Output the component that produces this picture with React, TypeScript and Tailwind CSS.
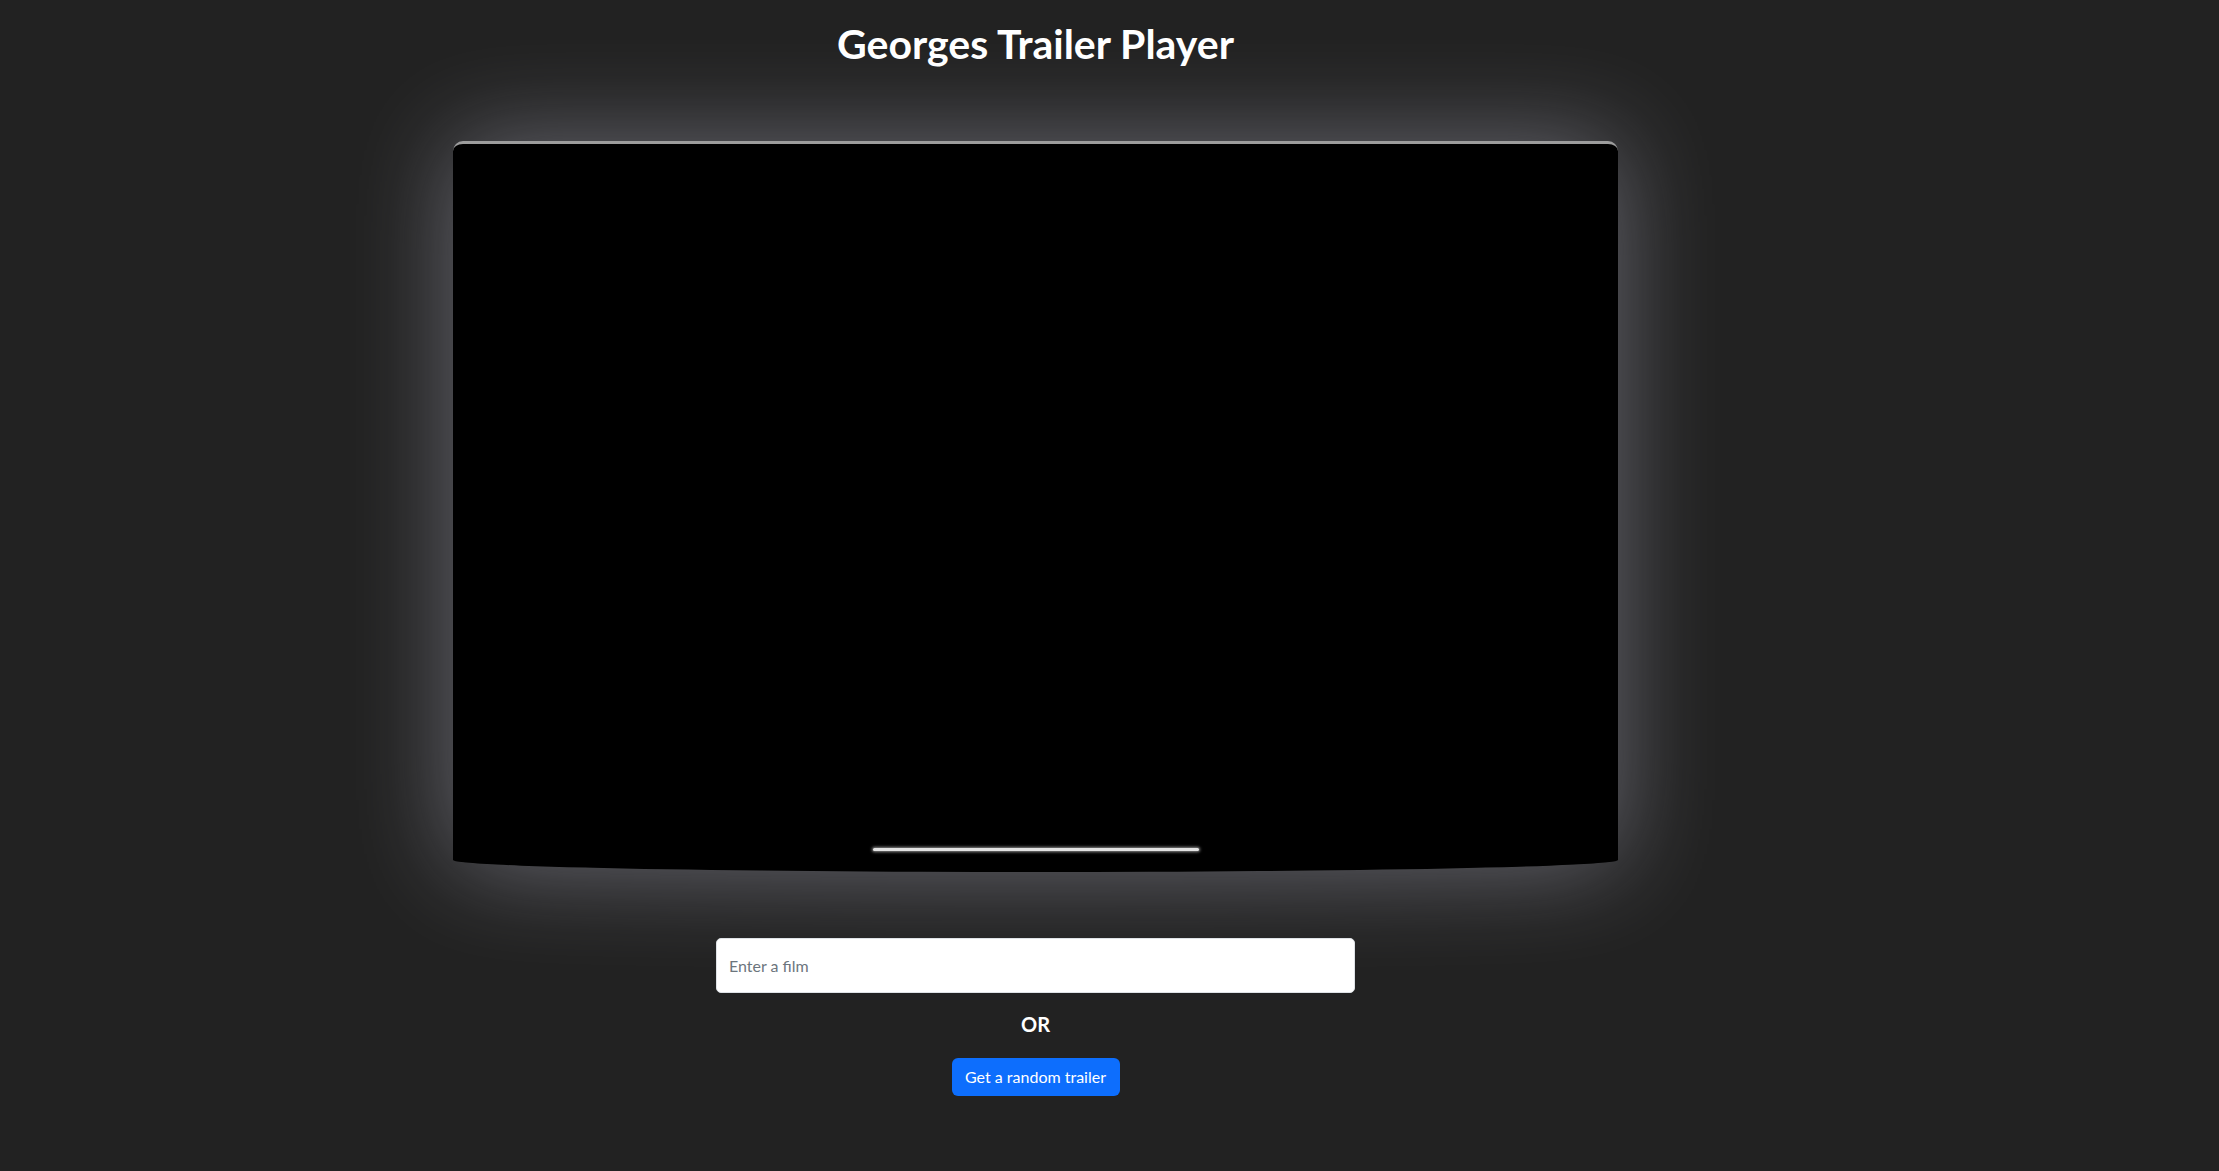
import React from "react";

export default function App() {
  return (
    <div className="min-h-screen w-full bg-[#222222] flex flex-col items-center pr-[148px] font-['Lato','Noto_Sans',sans-serif] text-white">
      <h1 className="pt-[20px] text-[41px] leading-[48px] font-bold">
        Georges Trailer Player
      </h1>

      <div className="mt-[73px] w-[1165px] h-[731px] bg-black border-t-[3px] border-[#9c9c9c] rounded-t-[10px] rounded-b-[50%_12px] shadow-[0_0_100px_rgba(215,215,235,0.4)] flex flex-col justify-end items-center">
        <div className="mb-[21px] w-[326px] h-[3px] rounded-full bg-[#e2e2e2] shadow-[0_0_3px_1px_rgba(200,200,200,0.7)]" />
      </div>

      <input
        type="text"
        placeholder="Enter a film"
        className="mt-[66px] w-[639px] h-[55px] rounded-[5px] border border-[#dee2e6] bg-white pl-[12px] pr-[12px] text-[16px] text-[#212529] placeholder:text-[#6c757d] outline-none font-['Lato',sans-serif]"
      />

      <div className="mt-[19px] text-[20px] leading-[24px] font-bold">OR</div>

      <button className="mt-[22px] w-[168px] h-[38px] rounded-[6px] bg-[#0d6efd] text-[16px] text-white font-['Lato',sans-serif]">
        Get a random trailer
      </button>
    </div>
  );
}
